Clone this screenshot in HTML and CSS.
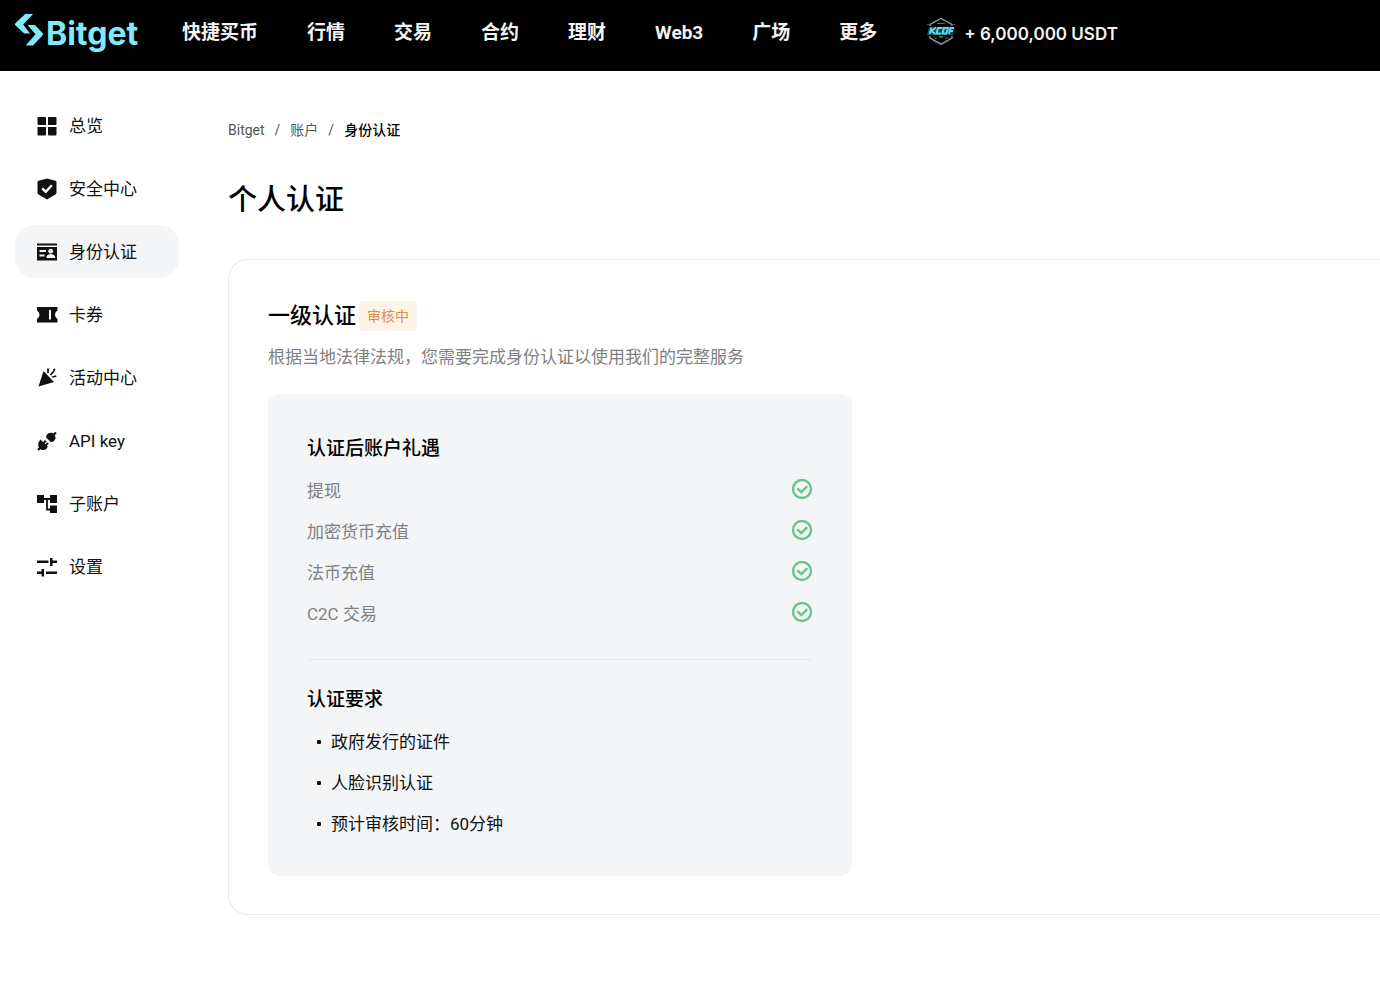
FILE: index.html
```html
<!DOCTYPE html>
<html lang="zh-CN">
<head>
<meta charset="utf-8">
<meta name="viewport" content="width=device-width, initial-scale=1">
<title>身份认证 - Bitget</title>
<link rel="stylesheet" href="styles.css">
</head>
<body>
<svg class="sprite" aria-hidden="true">
  <symbol id="tick" viewBox="0 0 22 22"><circle cx="11" cy="11" r="9" fill="none" stroke="currentColor" stroke-width="2.300"/><path d="M6.300 10.300l4 3.800 6-6" fill="none" stroke="currentColor" stroke-width="2.300"/></symbol>
</svg>
<header class="topbar">
  <a class="logo" href="#">
    <svg width="31" height="34" viewBox="0 0 31 34" fill="#82e9fb" aria-hidden="true"><path d="M11.200 2H19L9.200 12.500 16 21.500H10.200L1.300 13.200Q.4 12.200 1.300 11.200Z"/><path d="M13.500 13H21L28.700 21.300Q29.600 22.300 28.700 23.300L19 33.500H11.700L21.500 22.300Z"/></svg>
    <span>Bitget</span>
  </a>
  <nav class="nav">
    <a href="#">快捷买币</a>
    <a href="#">行情</a>
    <a href="#">交易</a>
    <a href="#">合约</a>
    <a href="#">理财</a>
    <a href="#">Web3</a>
    <a href="#">广场</a>
    <a href="#">更多</a>
  </nav>
  <a class="promo" href="#">
    <svg width="30" height="30" viewBox="0 0 30 30" fill="none" aria-hidden="true"><path d="M4 9V7.500L15 1.500 26 7.500V9M4 19v2l11 6 11-6v-2" stroke="#9a9fa2" stroke-width="1.300"/><path d="M11 6.500h8M8 21h3M19 21h3M13 19.500h4l-2 2zM8 24l7 4 7-4" stroke="#666b6e"/><path d="M1 7.500h3M26 7.500h3" stroke="#555"/><path d="M3 10h26l-2 8H1z" fill="#17434e"/><path d="M3.500 17l2-6.500M10 10.500l-4.500 3.500 3.500 3M16.500 11h-4.500l-1.500 5.500h4.500M18 11h4l-1.500 5.500h-4zM28 11h-3.500l-1.500 6M27 14h-3" stroke="#5cd5e8" stroke-width="2"/></svg>
    <span>+ 6,000,000 USDT</span>
  </a>
</header>
<div class="layout">
  <nav class="sidebar">
    <a class="item" href="#"><svg viewBox="0 0 24 24"><path d="M3.500 3h6.500q1 0 1 1v7H3.500q-1 0-1-1V4q0-1 1-1zM13 3h7.500q1 0 1 1v6q0 1-1 1H13zM2.500 13H11v7.500q0 1-1 1H3.500q-1 0-1-1zM13 13h8.500v7.500q0 1-1 1H14q-1 0-1-1z"/></svg>总览</a>
    <a class="item" href="#"><svg viewBox="0 0 24 24"><path d="M12 1.500l8.500 2.200q1 .3 1 1.300v10.500q0 1.400-1.100 2.100L12 22.500l-8.400-4.900q-1.100-.7-1.100-2.100V5q0-1 1-1.300z"/><path d="M7.200 11.300l3.600 3.500 6-6.500" fill="none" stroke="#fff" stroke-width="2.400"/></svg>安全中心</a>
    <a class="item active" href="#" aria-current="page"><svg viewBox="0 0 24 24"><path d="M2 3.500h20v2H2zM2 7h20v13.500H2z"/><path d="M4.500 10h6.500v2H4.500zM4.500 14.500h5v2h-5zM11.500 18v-2q1.700-2 4.200-2t4.300 2v2z" fill="#f3f5f7"/><circle cx="15.700" cy="11.200" r="2.400" fill="#f3f5f7"/></svg>身份认证</a>
    <a class="item" href="#"><svg viewBox="0 0 24 24"><path d="M2 4h20.500v3.500q-2.500 1.300-2.500 4.200t2.500 4.300v3.500H2v-3.500q2.500-1.400 2.500-4.300T2 7.500z"/><path d="M14 7h2v9.500h-2z" fill="#fff"/></svg>卡券</a>
    <a class="item" href="#"><svg viewBox="0 0 24 24"><path d="M8.500 5L19 16 3.500 20.500z"/><path d="M13 2.500v4.500M15.500 9l3.500-4M17.300 11l4-1M18.500 4.500l1.500-1.500" fill="none" stroke="#111" stroke-width="1.800"/></svg>活动中心</a>
    <a class="item" href="#"><svg viewBox="0 0 24 24"><path d="M11 8.500q0-3 2.500-4.200 2.700-1.300 5 .2l1.700-1.700 1.500 1.500-1.900 1.900q1.500 2.500 0 4.800-1.300 2.200-4 2zM5.500 10.500l2.500 2.500 2-2 1.500 1.500-2 2 .8.800 2-2 1.500 1.500-2 2 1 1q-1 2.700-3.500 3.200-2.300.3-3.800-.8L3.800 21.700l-1.500-1.500 1.500-1.500q-1.800-4.500 1.700-8.200z"/></svg>API key</a>
    <a class="item" href="#"><svg viewBox="0 0 24 24"><path d="M2 3h7v8H2zM15 3h7v8h-7zM15 13.500h7V21h-7z"/><path d="M9 7h6M12 7v10.500h3" fill="none" stroke="#111" stroke-width="1.800"/></svg>子账户</a>
    <a class="item" href="#"><svg viewBox="0 0 24 24"><path d="M2 5.500h11.500V8H2zM15 3h2.500v2.500H22V8h-4.500v3H15zM11 16.500h11V19H11zM6.500 14H9v7.500H6.500V19H2v-2.500h4.500z"/></svg>设置</a>
  </nav>
  <main class="main">
    <nav class="crumbs" aria-label="面包屑">
      <a href="#">Bitget</a><span>/</span><a href="#">账户</a><span>/</span><strong>身份认证</strong>
    </nav>
    <h1>个人认证</h1>
    <section class="card">
      <div class="card-head"><h2>一级认证</h2><span class="badge">审核中</span></div>
      <p class="desc">根据当地法律法规，您需要完成身份认证以使用我们的完整服务</p>
      <div class="panel">
        <h3>认证后账户礼遇</h3>
        <ul class="perks">
          <li>提现<svg><use href="#tick"/></svg></li>
          <li>加密货币充值<svg><use href="#tick"/></svg></li>
          <li>法币充值<svg><use href="#tick"/></svg></li>
          <li>C2C 交易<svg><use href="#tick"/></svg></li>
        </ul>
        <hr>
        <h3>认证要求</h3>
        <ul class="needs">
          <li>政府发行的证件</li>
          <li>人脸识别认证</li>
          <li>预计审核时间：60分钟</li>
        </ul>
      </div>
    </section>
  </main>
</div>
</body>
</html>
```
FILE: styles.css
```css
* { box-sizing: border-box; }
body {
  margin: 0;
  background: #fff;
  color: #111;
  font: 17px/26px Roboto, "Noto Sans CJK SC", sans-serif;
}
a { color: inherit; text-decoration: none; }
h1, h2, h3, p, ul { margin: 0; padding: 0; }
h1, h2, h3 { font-weight: 500; color: #000; }
ul { list-style: none; }
.sprite { display: none; }

.topbar {
  display: flex;
  align-items: flex-start;
  height: 71px;
  padding: 12px 14px 0;
  background: #000;
  color: #f4f4f4;
  white-space: nowrap;
}
.logo {
  display: flex;
  width: 168px;
  gap: 1px;
  color: #82e9fb;
  font: bold 32px/44px Inter, sans-serif;
}
.logo svg { flex: none; }
.nav {
  display: flex;
  gap: 49px;
  margin-right: 49px;
  font-size: 19px;
  font-weight: 700;
  line-height: 42px;
}
.promo {
  display: flex;
  align-items: center;
  gap: 8px;
  font: 600 17px/44px Inter, sans-serif;
}
.promo svg { margin-bottom: 4px; }

.layout { display: flex; }
.sidebar {
  display: flex;
  flex: none;
  flex-direction: column;
  gap: 10px;
  width: 228px;
  padding: 28px 49px 0 15px;
}
.item {
  display: flex;
  align-items: center;
  gap: 10px;
  height: 53px;
  padding-left: 20px;
  border-radius: 20px;
}
.item svg { width: 24px; height: 24px; fill: #111; }
.active { background: #f3f5f7; }

.main { flex: 1; min-width: 0; padding: 49px 0 82px; }
.crumbs {
  display: flex;
  gap: 10px;
  color: #555;
  font-size: 14px;
  line-height: 20px;
}
.crumbs strong { color: #000; font-weight: 500; }
h1 { margin: 40px 0 39px; font-size: 29px; line-height: 40px; }
.card {
  padding: 41px 39px 38px;
  border: 1px solid #e9eaeb;
  border-right: 0;
  border-radius: 20px 0 0 20px;
}
.card-head { display: flex; gap: 3px; }
h2 { font-size: 22px; line-height: 30px; }
.badge {
  padding: 0 8px;
  border-radius: 4px;
  background: #fdf3e7;
  color: #e28b4b;
  font-size: 14px;
  line-height: 30px;
}
.desc { margin: 13px 0 24px; color: #808080; }
.panel {
  max-width: 584px;
  padding: 40px 40px 31px 39px;
  border-radius: 12px;
  background: #f3f5f7;
}
h3 { margin-bottom: 7px; font-size: 19px; line-height: 30px; }
.perks li {
  display: flex;
  justify-content: space-between;
  padding: 7px 0 8px;
  color: #808080;
}
.perks svg { width: 22px; height: 22px; margin-right: -1px; color: #68c48a; }
hr { height: 1px; margin: 24px 0 25px; border: 0; background: #e6e8ea; }
.needs li {
  display: flex;
  align-items: center;
  gap: 10px;
  padding: 7px 0 8px 10px;
}
.needs li::before {
  content: "";
  width: 4px;
  height: 4px;
  border-radius: 1px;
  background: #111;
}
```
